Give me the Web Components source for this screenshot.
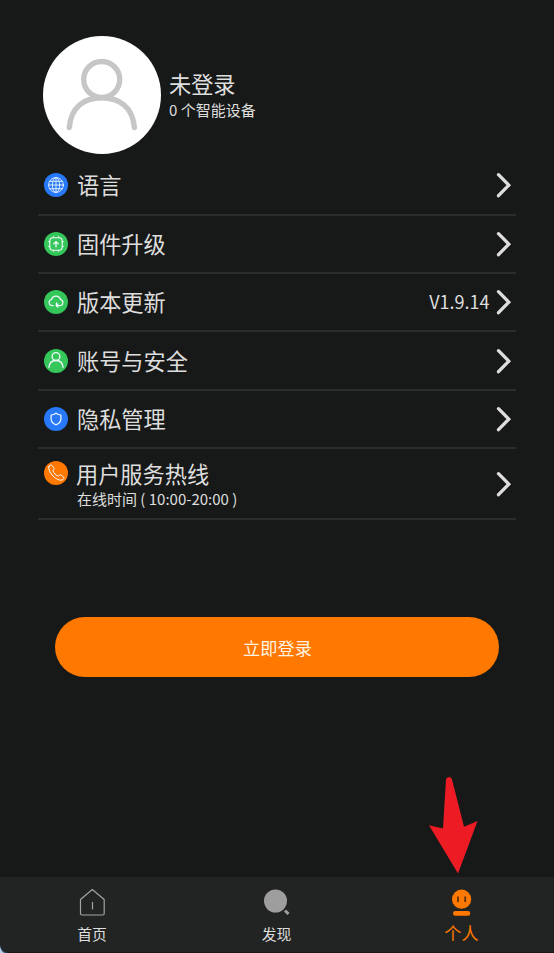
<!DOCTYPE html>
<html lang="zh-CN">
<head>
<meta charset="utf-8">
<title>个人</title>
<style>
html,body{margin:0;height:100%;background:#171918}
body{font-family:"Noto Sans CJK SC",sans-serif;color:#dedede;overflow:hidden}
</style>
</head>
<body>
<profile-page></profile-page>
<script>
const define = (name, html) => customElements.define(name, class extends HTMLElement {
  constructor() {
    super();
    this.attachShadow({mode: "open"}).innerHTML = typeof html === "function" ? html(this) : html;
  }
});

const glyphs = {
  globe: ["#2878fa", `<circle cx="12" cy="12" r="7.4"/><ellipse cx="12" cy="12" rx="3.6" ry="7.4"/><path d="M12 4.6v14.8M4.6 12h14.8M5.7 8.3h12.6M5.7 15.7h12.6"/>`],
  chip: ["#35c759", `<rect x="5.8" y="5.8" width="12.4" height="12.4" rx="3.2" stroke-width="1.1"/><path d="M9.6 5.8V4.5M14.4 5.8V4.5M9.6 18.2v1.3M14.4 18.2v1.3M5.8 9.6H4.5M5.8 14.4H4.5M18.2 9.6h1.3M18.2 14.4h1.3"/><path stroke-width="1.3" d="M12 14.8V9.8M9.8 11.8 12 9.6l2.2 2.2"/>`],
  cloud: ["#35c759", `<path stroke-width="1.2" d="M9.2 15.6H8a3.1 3.1 0 0 1-.5-6.1A4.7 4.7 0 0 1 16.5 9.500000a3.1 3.1 0 0 1-.4 6.1h-3.6"/><path stroke-width="1.2" d="M12.4 12.8v2.8M14 14l-2 1.6 2 1.6"/>`],
  user: ["#35c759", `<circle cx="12" cy="7.5" r="3.9" stroke-width="1.3"/><path stroke-width="1.3" d="M5 18.3c.4-4.500000 2.900000-6.800000 7-6.800000s6.600000 2.300000 7 6.800000"/>`],
  shield: ["#2878fa", `<path stroke-width="1.2" d="M12 6.200000c1.600000 1.200000 3.100000 1.700000 4.900000 1.800000v4c0 2.700000-2 4.600000-4.900000 5.800000-2.900000-1.200000-4.900000-3.100000-4.900000-5.800000V8c1.800000-.1 3.300000-.6 4.900000-1.800000z"/>`],
  phone: ["#ff7800", `<path stroke-width="1" d="M4.700000 5.800000c.8-1.600000 2.200000-2.300000 3.300000-1.300000l1.800000 2.300000c.7 1 .3 1.800000-.9 2.900000.7 2.300000 3.200000 4.700000 5.600000 5.400000 1-1.200000 1.900000-1.500000 2.900000-.8l2 1.500000c1.200000 1.100000.3 2.700000-1.500000 3.300000C13 20.400000 3.600000 11.500000 4.700000 5.800000z"/>`]
};

define("user-avatar", `<style>
:host{display:block;width:118px;height:118px;border-radius:50%;background:#fff;flex:none}
svg{display:block}</style>
<svg width="118" height="118" viewBox="0 0 118 118" fill="none" stroke="#c6c6c6" stroke-width="5.4" stroke-linecap="round">
<circle cx="58.700000" cy="43.500000" r="18"/><path d="M26.300000 91.500000C28 71 41 61.800000 58.700000 61.800000s31 9.200000 32.700000 29.700000"/></svg>`);

define("profile-header", `<style>
:host{display:flex;padding:36px 0 0 43px;height:118px}
.info{padding:33px 0 0 8px;white-space:nowrap}
.name{font-size:22.2px;line-height:28px}
.sub{font-size:15px;line-height:22px;margin-top:2px}</style>
<user-avatar></user-avatar><div class="info"><div class="name"><slot name="name"></slot></div><div class="sub"><slot></slot></div></div>`);

define("menu-icon", el => {
  const [color, shape] = glyphs[el.getAttribute("name")];
  return `<style>:host{display:block;width:24px;height:24px;flex:none}svg{display:block}</style>
<svg width="24" height="24" viewBox="0 0 24 24"><circle cx="12" cy="12" r="12" fill="${color}"/>
<g fill="none" stroke="#f2faff" stroke-width=".85" stroke-linecap="round" stroke-linejoin="round">${shape}</g></svg>`;
});

define("menu-chevron", `<style>:host{display:block;width:16px;height:26px}svg{display:block}</style>
<svg width="16" height="26" viewBox="0 0 16 26" fill="none" stroke="#dedede" stroke-width="3.3" stroke-linecap="round" stroke-linejoin="miter"><path d="M2.500000 2.700000 12.800000 13.200000 2.500000 23.700000"/></svg>`);

define("menu-item", el => `<style>
:host{display:flex;box-sizing:border-box;height:58.4px;border-bottom:2px solid #2b2d2c;align-items:center;padding:0 4.5px 0 6px;white-space:nowrap}
:host([tall]){height:71px}
.text{flex:1;padding:0 0 2px 9px}
.label{font-size:22.2px;line-height:30px}
:host([tall]) .text{padding:0 0 0 8px}
:host([tall]) menu-icon{margin-bottom:21px}
.note{display:none;font-size:15px;line-height:22px;padding-left:1px}
:host([tall]) .note{display:block}
.value{font-size:18px;margin-right:6px;padding-bottom:2px}</style>
<menu-icon name="${el.getAttribute("icon")}"></menu-icon>
<div class="text"><div class="label"><slot></slot></div><div class="note"><slot name="note"></slot></div></div>
<div class="value"><slot name="value"></slot></div><menu-chevron></menu-chevron>`);

define("menu-list", `<style>:host{display:block;margin:3.2px 38px 0}</style><slot></slot>`);

define("login-button", `<style>
:host{display:block;margin:96.8px 55px 0}
button{all:unset;box-sizing:border-box;display:block;width:444px;height:60.5px;line-height:59px;padding-left:1px;text-align:center;border-radius:31px;background:#ff7800;color:#fff3e2;font-size:17.2px}</style>
<button><slot></slot></button>`);

define("tab-item", `<style>
:host{display:flex;flex-direction:column;align-items:center;flex:1;font-size:14.8px;line-height:22px;white-space:nowrap}
:host([active]){color:#ff7800;font-size:17.2px}
.icon{height:36px;margin-top:10px}
:host([active]) .text{margin-top:-1px}</style>
<div class="icon"><slot name="icon"></slot></div><div class="text"><slot></slot></div>`);

define("tab-bar", `<style>
:host{position:relative;display:flex;box-sizing:border-box;height:76px;background:#222423;overflow:hidden}
.corner{position:absolute;left:0;bottom:0}
.edge{position:absolute;left:5px;right:0;bottom:0;height:1px;background:#171918}</style><slot></slot>
<i class="edge"></i><svg class="corner" width="8" height="8"><path d="M0 0Q1 7 8 8H0z" fill="#496d96"/><path d="M0 2Q1 6 4 8H0z" fill="#b9cde0"/></svg>`);

define("pointer-arrow", `<style>:host{position:absolute;left:428px;top:776px}svg{display:block}</style>
<svg width="52" height="100" viewBox="0 0 52 100"><path fill="#ed1c24" d="M18 3.500000Q18.500000 1 21 1t3 2.500000L36 50.800000 49.500000 45 30 97.500000 1 49.200000 15 52.500000z"/></svg>`);

define("profile-page", `<style>
:host{position:relative;display:flex;flex-direction:column;height:953px;width:554px;background:#171918}
tab-bar{margin-top:auto}
tab-item svg{display:block}
tab-item:first-of-type{flex:0 0 184px}
</style>
<profile-header><span slot="name">未登录</span>0 个智能设备</profile-header>
<menu-list>
<menu-item icon="globe">语言</menu-item>
<menu-item icon="chip">固件升级</menu-item>
<menu-item icon="cloud">版本更新<span slot="value">V1.9.14</span></menu-item>
<menu-item icon="user">账号与安全</menu-item>
<menu-item icon="shield">隐私管理</menu-item>
<menu-item icon="phone" tall>用户服务热线<span slot="note">在线时间 ( 10:00-20:00 )</span></menu-item>
</menu-list>
<login-button>立即登录</login-button>
<tab-bar>
<tab-item><svg slot="icon" width="28" height="30" viewBox="0 0 28 30" fill="none" stroke="#a2a3a2" stroke-width="1.2" stroke-linejoin="round"><path d="M2.500000 12.500000 14.300000 2.500000 26.200000 12.500000V26.500000q0 1.500000-1.500000 1.500000H4q-1.500000 0-1.500000-1.500000z"/><path d="M14.500000 15v7.500000"/></svg>首页</tab-item>
<tab-item><svg slot="icon" width="28" height="30" viewBox="0 0 28 30"><circle cx="12.500000" cy="14" r="11.500000" fill="#9d9e9d"/><path d="m22 23.500000 3.500000 3.500000" stroke="#9d9e9d" stroke-width="3"/></svg>发现</tab-item>
<tab-item active><svg slot="icon" width="28" height="30" viewBox="0 0 28 30" fill="#ff7800"><circle cx="13.600000" cy="12.200000" r="9.600000"/><rect x="5" y="24" width="17.200000" height="4.700000" rx="2.300000"/><path d="M10 9.500000v5.500000M17.200000 9.500000v5.500000" stroke="#5e3210" stroke-width="1.800000"/></svg>个人</tab-item>
</tab-bar>
<pointer-arrow></pointer-arrow>`);
</script>
</body>
</html>
